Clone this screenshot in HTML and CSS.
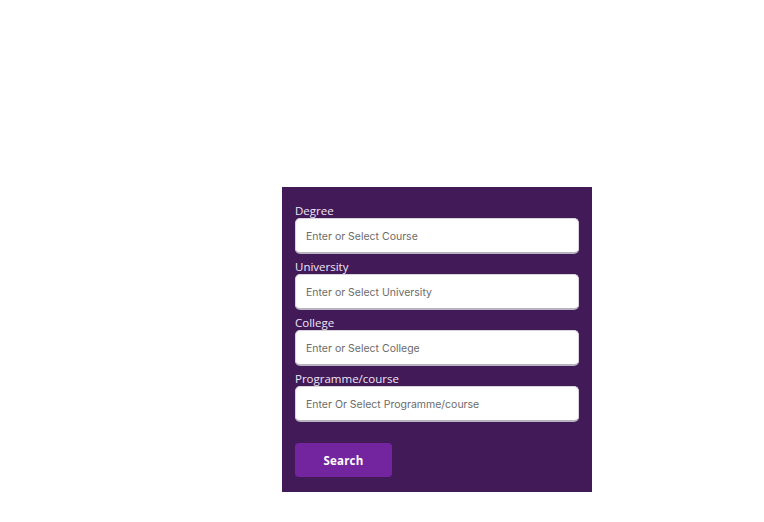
FILE: index.html
```html
<!DOCTYPE html>
<html>
<head>
<meta charset="utf-8">
<link rel="stylesheet" href="styles.css">
</head>
<body>
<div class="page">
  <form class="panel">
    <div class="field">
      <label class="label">Degree</label>
      <input class="input" type="text" placeholder="Enter or Select Course">
    </div>
    <div class="field">
      <label class="label">University</label>
      <input class="input" type="text" placeholder="Enter or Select University">
    </div>
    <div class="field">
      <label class="label">College</label>
      <input class="input" type="text" placeholder="Enter or Select College">
    </div>
    <div class="field">
      <label class="label">Programme/course</label>
      <input class="input" type="text" placeholder="Enter Or Select Programme/course">
    </div>
    <button class="btn" type="button">Search</button>
  </form>
</div>
</body>
</html>
```
FILE: styles.css
```css
html, body {
  margin: 0;
  padding: 0;
  background: #ffffff;
}
.page {
  padding: 187px 0 0 282px;
}
.panel {
  width: 310px;
  box-sizing: border-box;
  background: #421a58;
  padding: 13px 13px 15px 13px;
  display: flex;
  flex-direction: column;
  gap: 2px;
}
.field {
  display: flex;
  flex-direction: column;
}
.label {
  font-family: "Open Sans", "Liberation Sans", sans-serif;
  font-size: 11.5px;
  line-height: 15px;
  padding-top: 3px;
  color: #efe6f5;
  height: 15px;
}
.input {
  height: 36px;
  box-sizing: border-box;
  border: 1px solid #d8d3dc;
  border-bottom: 2px solid #b9b2c0;
  border-radius: 5px;
  background: #fff;
  padding: 2px 10px 0 10px;
  font-family: "Inter", "Liberation Sans", sans-serif;
  font-size: 10.5px;
  color: #333;
  outline: none;
}
.input::placeholder {
  color: #6b6b6b;
}
.btn {
  margin-top: 19px;
  width: 97px;
  height: 34px;
  border: none;
  border-radius: 4px;
  background: #7325a0;
  color: #fff;
  font-family: "Open Sans", "Liberation Sans", sans-serif;
  font-weight: 700;
  font-size: 11.5px;
  letter-spacing: 0.2px;
  cursor: pointer;
}
```
